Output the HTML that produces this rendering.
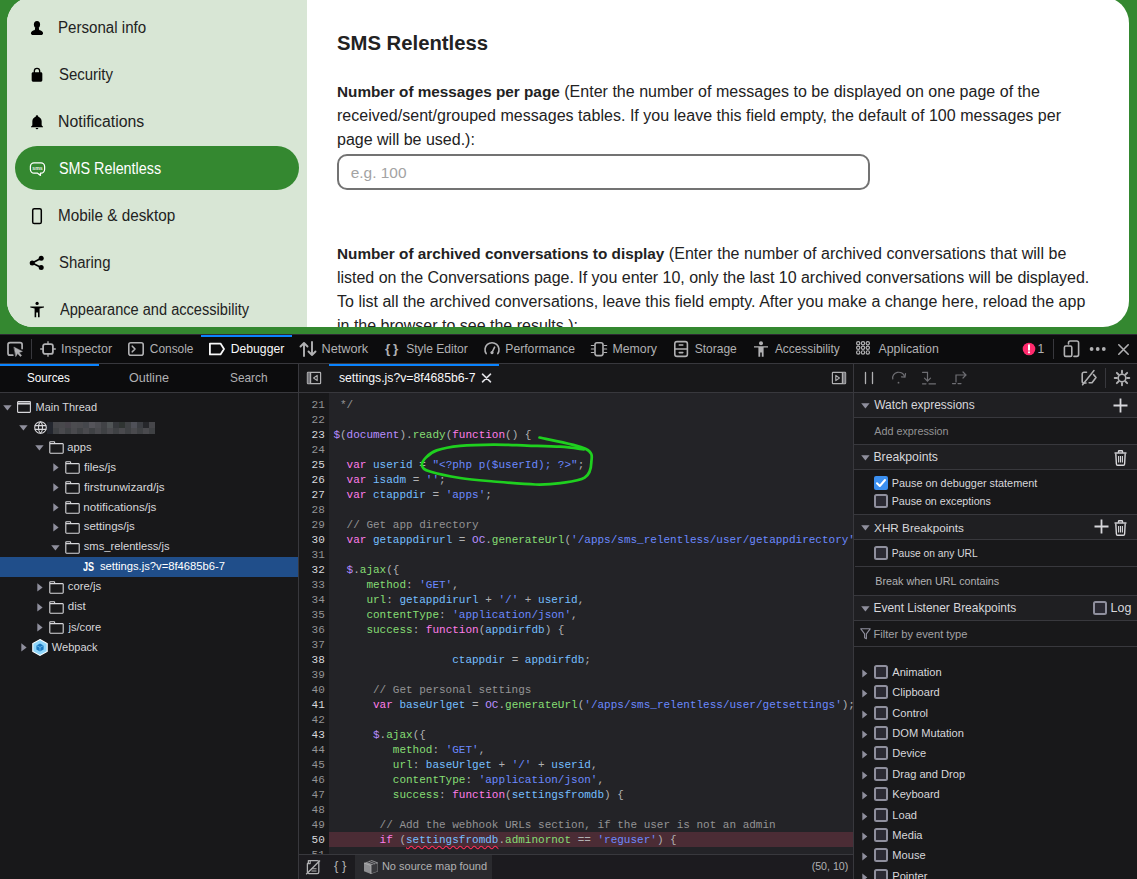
<!DOCTYPE html>
<html><head><meta charset="utf-8">
<style>
*{box-sizing:border-box;margin:0;padding:0}
html,body{width:1137px;height:879px;overflow:hidden}
body{position:relative;background:#348830;font-family:"Liberation Sans",sans-serif}
.a{position:absolute}
.nw{white-space:pre}
svg{position:absolute;overflow:visible}
</style></head>
<body>
<div class="a" style="left:7px;top:-3px;width:1122px;height:330px;border-radius:26px;overflow:hidden;background:#fff">
<div class="a" style="left:0;top:0;width:300px;height:330px;background:#d8e6d5"></div>
<div class="a" style="left:8px;top:149px;width:284px;height:44px;border-radius:22px;background:#348830"></div>
<div class="a nw" style="left:51.39px;top:20.12px;font-size:15.8px;line-height:21px;color:#222;font-family:'Liberation Sans',sans-serif;transform:scaleX(0.9557);transform-origin:0 0;">Personal info</div>
<div class="a nw" style="left:51.93px;top:67.12px;font-size:15.8px;line-height:21px;color:#222;font-family:'Liberation Sans',sans-serif;transform:scaleX(0.9463);transform-origin:0 0;">Security</div>
<div class="a nw" style="left:51.33px;top:114.12px;font-size:15.8px;line-height:21px;color:#222;font-family:'Liberation Sans',sans-serif;transform:scaleX(1.0022);transform-origin:0 0;">Notifications</div>
<div class="a nw" style="left:51.95px;top:161.12px;font-size:15.8px;line-height:21px;color:#fff;font-family:'Liberation Sans',sans-serif;transform:scaleX(0.9087);transform-origin:0 0;">SMS Relentless</div>
<div class="a nw" style="left:51.38px;top:208.12px;font-size:15.8px;line-height:21px;color:#222;font-family:'Liberation Sans',sans-serif;transform:scaleX(0.9674);transform-origin:0 0;">Mobile &amp; desktop</div>
<div class="a nw" style="left:51.93px;top:255.12px;font-size:15.8px;line-height:21px;color:#222;font-family:'Liberation Sans',sans-serif;transform:scaleX(0.9451);transform-origin:0 0;">Sharing</div>
<div class="a nw" style="left:52.60px;top:302.12px;font-size:15.8px;line-height:21px;color:#222;font-family:'Liberation Sans',sans-serif;transform:scaleX(0.9238);transform-origin:0 0;">Appearance and accessibility</div>
<svg style="left:-7px;top:3px" width="60" height="330" viewBox="0 0 60 330"><ellipse cx="37" cy="24.6" rx="3.1" ry="3.7"/><path d="M35.2,27.5 L34.8,30 C32.5,30.6 30.9,31.8 30.9,33.3 C30.9,34.5 31.8,35.1 33.2,35.1 H40.8 C42.2,35.1 43.1,34.5 43.1,33.3 C43.1,31.8 41.5,30.6 39.2,30 L38.8,27.5 Z"/></svg>
<svg style="left:22px;top:70px" width="16" height="16" viewBox="0 0 24 24"><path d="M18,8A2,2 0 0,1 20,10V20A2,2 0 0,1 18,22H6A2,2 0 0,1 4,20V10C4,8.89 4.9,8 6,8H7V6A5,5 0 0,1 12,1A5,5 0 0,1 17,6V8H18M12,3A3,3 0 0,0 9,6V8H15V6A3,3 0 0,0 12,3Z" fill="#000"/></svg>
<svg style="left:22px;top:117px" width="16" height="16" viewBox="0 0 24 24"><path d="M21,19V20H3V19L5,17V11C5,7.9 7.03,5.17 10,4.29C10,4.19 10,4.1 10,4A2,2 0 0,1 12,2A2,2 0 0,1 14,4C14,4.1 14,4.19 14,4.29C16.97,5.17 19,7.9 19,11V17L21,19M14,21A2,2 0 0,1 12,23A2,2 0 0,1 10,21" fill="#000"/></svg>
<svg style="left:22px;top:164px" width="17" height="16" viewBox="0 0 17 16"><path d="M5,1.9 H12 A3.6,3.6 0 0 1 15.6,5.5 V8.6 A3.6,3.6 0 0 1 12,12.2 H11.4 L11.5,14.4 L8.6,12.2 H5 A3.6,3.6 0 0 1 1.4,8.6 V5.5 A3.6,3.6 0 0 1 5,1.9 Z" fill="none" stroke="#fff" stroke-width="1.25" stroke-linejoin="round"/><text x="8.5" y="8.9" text-anchor="middle" font-family="Liberation Sans" font-weight="bold" font-size="5.2" fill="#fff" opacity="0.9">sms</text></svg>
<svg style="left:-7px;top:3px" width="60" height="330" viewBox="0 0 60 330"><rect x="32.7" y="208.7" width="8.6" height="14.8" rx="1.6" fill="none" stroke="#000" stroke-width="1.5"/></svg>
<svg style="left:-7px;top:3px" width="60" height="330" viewBox="0 0 60 330"><path d="M41.2,258.3 L32.2,263 L41.2,267.4" fill="none" stroke="#000" stroke-width="1.7"/><circle cx="41.2" cy="258.3" r="2.5"/><circle cx="32.2" cy="263" r="2.5"/><circle cx="41.2" cy="267.4" r="2.5"/></svg>
<svg style="left:-7px;top:3px" width="60" height="330" viewBox="0 0 60 330"><circle cx="37.1" cy="303.4" r="1.6"/><path d="M30.3,306.4 L44,306.4 L44,307.6 L39.6,308.4 V317.2 H38 V312.6 H36.2 V317.2 H34.6 V308.4 L30.3,307.6 Z"/></svg>
<div class="a nw" style="left:330.00px;top:32.86px;font-size:20.3px;line-height:26px;color:#222;font-family:'Liberation Sans',sans-serif;font-weight:bold;">SMS Relentless</div>
<div class="a nw" style="left:330.00px;top:83.75px;font-size:16px;line-height:21px;color:#222;font-family:'Liberation Sans',sans-serif;"><span style="font-size:15.3px;letter-spacing:0px;font-weight:bold;">Number of messages per page</span><span style="font-size:16px;letter-spacing:0.025px;"> (Enter the number of messages to be displayed on one page of the</span></div>
<div class="a nw" style="left:330.00px;top:107.75px;font-size:16px;line-height:21px;color:#222;font-family:'Liberation Sans',sans-serif;"><span style="font-size:16px;letter-spacing:0.03px;">received/sent/grouped messages tables. If you leave this field empty, the default of 100 messages per</span></div>
<div class="a nw" style="left:330.00px;top:131.75px;font-size:16px;line-height:21px;color:#222;font-family:'Liberation Sans',sans-serif;"><span style="font-size:16px;letter-spacing:0px;">page will be used.):</span></div>
<div class="a" style="left:330px;top:157px;width:533px;height:35.5px;border:2px solid #737373;border-radius:10px"></div>
<div class="a nw" style="left:343.78px;top:166.25px;font-size:15.42px;line-height:20px;color:#a3a3a3;font-family:'Liberation Sans',sans-serif;">e.g. 100</div>
<div class="a nw" style="left:330.00px;top:245.65px;font-size:16px;line-height:21px;color:#222;font-family:'Liberation Sans',sans-serif;"><span style="font-size:15.3px;letter-spacing:0px;font-weight:bold;">Number of archived conversations to display</span><span style="font-size:16px;letter-spacing:0.05px;"> (Enter the number of archived conversations that will be</span></div>
<div class="a nw" style="left:330.00px;top:269.75px;font-size:16px;line-height:21px;color:#222;font-family:'Liberation Sans',sans-serif;"><span style="font-size:16px;letter-spacing:-0.018px;">listed on the Conversations page. If you enter 10, only the last 10 archived conversations will be displayed.</span></div>
<div class="a nw" style="left:330.00px;top:293.55px;font-size:16px;line-height:21px;color:#222;font-family:'Liberation Sans',sans-serif;"><span style="font-size:16px;letter-spacing:0.014px;">To list all the archived conversations, leave this field empty. After you make a change here, reload the app</span></div>
<div class="a nw" style="left:330.00px;top:317.55px;font-size:16px;line-height:21px;color:#222;font-family:'Liberation Sans',sans-serif;"><span style="font-size:16px;letter-spacing:0px;">in the browser to see the results.):</span></div>
</div>
<div class="a" style="left:0px;top:334px;width:1137px;height:545px;background:#18181a;"></div>
<div class="a" style="left:0px;top:334px;width:1137px;height:1px;background:#2e2a33;"></div>
<div class="a" style="left:0px;top:335px;width:1137px;height:28px;background:#0c0c0d;"></div>
<div class="a" style="left:0px;top:363px;width:1137px;height:1px;background:#38383d;"></div>
<div class="a" style="left:0px;top:364px;width:298px;height:28px;background:#0c0c0d;"></div>
<div class="a" style="left:299px;top:364px;width:554px;height:28px;background:#18181a;"></div>
<div class="a" style="left:854px;top:364px;width:283px;height:28px;background:#18181a;"></div>
<div class="a" style="left:0px;top:392px;width:1137px;height:1px;background:#38383d;"></div>
<div class="a" style="left:298px;top:364px;width:1px;height:515px;background:#38383d;"></div>
<div class="a" style="left:853px;top:364px;width:1px;height:515px;background:#38383d;"></div>
<div class="a" style="left:299px;top:393px;width:30px;height:461px;background:#18181a;"></div>
<div class="a" style="left:329px;top:393px;width:524px;height:461px;background:#232327;"></div>
<div class="a" style="left:299px;top:393px;width:554px;height:461px;overflow:hidden">
<div class="a" style="left:30px;top:439px;width:524px;height:15px;background:#4b2c35;"></div>
<div class="a nw" style="left:12.60px;top:5.07px;font-size:11px;line-height:15px;color:#939395;font-family:'Liberation Mono',monospace;">21</div>
<div class="a nw" style="left:34.40px;top:5.07px;font-size:11px;line-height:15px;color:#b1b1b3;font-family:'Liberation Mono',monospace;"><span style="color:#939395;"> */</span></div>
<div class="a nw" style="left:12.60px;top:20.07px;font-size:11px;line-height:15px;color:#939395;font-family:'Liberation Mono',monospace;">22</div>
<div class="a nw" style="left:12.60px;top:35.07px;font-size:11px;line-height:15px;color:#d7d7db;font-family:'Liberation Mono',monospace;">23</div>
<div class="a nw" style="left:34.40px;top:35.07px;font-size:11px;line-height:15px;color:#b1b1b3;font-family:'Liberation Mono',monospace;"><span style="color:#b98eff;">$</span><span style="color:#b1b1b3;">(</span><span style="color:#b98eff;">document</span><span style="color:#b1b1b3;">).</span><span style="color:#86de74;">ready</span><span style="color:#b1b1b3;">(</span><span style="color:#ff7de9;">function</span><span style="color:#b1b1b3;">() {</span></div>
<div class="a nw" style="left:12.60px;top:50.07px;font-size:11px;line-height:15px;color:#939395;font-family:'Liberation Mono',monospace;">24</div>
<div class="a nw" style="left:12.60px;top:65.07px;font-size:11px;line-height:15px;color:#d7d7db;font-family:'Liberation Mono',monospace;">25</div>
<div class="a nw" style="left:34.40px;top:65.07px;font-size:11px;line-height:15px;color:#b1b1b3;font-family:'Liberation Mono',monospace;"><span style="color:#b1b1b3;">  </span><span style="color:#ff7de9;">var</span><span style="color:#b1b1b3;"> </span><span style="color:#75bfff;">userid</span><span style="color:#b1b1b3;"> = </span><span style="color:#6b89ff;">&quot;&lt;?php p($userId); ?&gt;&quot;</span><span style="color:#b1b1b3;">;</span></div>
<div class="a nw" style="left:12.60px;top:80.07px;font-size:11px;line-height:15px;color:#d7d7db;font-family:'Liberation Mono',monospace;">26</div>
<div class="a nw" style="left:34.40px;top:80.07px;font-size:11px;line-height:15px;color:#b1b1b3;font-family:'Liberation Mono',monospace;"><span style="color:#b1b1b3;">  </span><span style="color:#ff7de9;">var</span><span style="color:#b1b1b3;"> </span><span style="color:#75bfff;">isadm</span><span style="color:#b1b1b3;"> = </span><span style="color:#6b89ff;">&#x27;&#x27;</span><span style="color:#b1b1b3;">;</span></div>
<div class="a nw" style="left:12.60px;top:95.07px;font-size:11px;line-height:15px;color:#d7d7db;font-family:'Liberation Mono',monospace;">27</div>
<div class="a nw" style="left:34.40px;top:95.07px;font-size:11px;line-height:15px;color:#b1b1b3;font-family:'Liberation Mono',monospace;"><span style="color:#b1b1b3;">  </span><span style="color:#ff7de9;">var</span><span style="color:#b1b1b3;"> </span><span style="color:#75bfff;">ctappdir</span><span style="color:#b1b1b3;"> = </span><span style="color:#6b89ff;">&#x27;apps&#x27;</span><span style="color:#b1b1b3;">;</span></div>
<div class="a nw" style="left:12.60px;top:110.07px;font-size:11px;line-height:15px;color:#939395;font-family:'Liberation Mono',monospace;">28</div>
<div class="a nw" style="left:12.60px;top:125.07px;font-size:11px;line-height:15px;color:#939395;font-family:'Liberation Mono',monospace;">29</div>
<div class="a nw" style="left:34.40px;top:125.07px;font-size:11px;line-height:15px;color:#b1b1b3;font-family:'Liberation Mono',monospace;"><span style="color:#939395;">  // Get app directory</span></div>
<div class="a nw" style="left:12.60px;top:140.07px;font-size:11px;line-height:15px;color:#d7d7db;font-family:'Liberation Mono',monospace;">30</div>
<div class="a nw" style="left:34.40px;top:140.07px;font-size:11px;line-height:15px;color:#b1b1b3;font-family:'Liberation Mono',monospace;"><span style="color:#b1b1b3;">  </span><span style="color:#ff7de9;">var</span><span style="color:#b1b1b3;"> </span><span style="color:#75bfff;">getappdirurl</span><span style="color:#b1b1b3;"> = </span><span style="color:#b98eff;">OC</span><span style="color:#b1b1b3;">.</span><span style="color:#86de74;">generateUrl</span><span style="color:#b1b1b3;">(</span><span style="color:#6b89ff;">&#x27;/apps/sms_relentless/user/getappdirectory&#x27;</span><span style="color:#b1b1b3;">);</span></div>
<div class="a nw" style="left:12.60px;top:155.07px;font-size:11px;line-height:15px;color:#939395;font-family:'Liberation Mono',monospace;">31</div>
<div class="a nw" style="left:12.60px;top:170.07px;font-size:11px;line-height:15px;color:#d7d7db;font-family:'Liberation Mono',monospace;">32</div>
<div class="a nw" style="left:34.40px;top:170.07px;font-size:11px;line-height:15px;color:#b1b1b3;font-family:'Liberation Mono',monospace;"><span style="color:#b1b1b3;">  </span><span style="color:#b98eff;">$</span><span style="color:#b1b1b3;">.</span><span style="color:#86de74;">ajax</span><span style="color:#b1b1b3;">({</span></div>
<div class="a nw" style="left:12.60px;top:185.07px;font-size:11px;line-height:15px;color:#939395;font-family:'Liberation Mono',monospace;">33</div>
<div class="a nw" style="left:34.40px;top:185.07px;font-size:11px;line-height:15px;color:#b1b1b3;font-family:'Liberation Mono',monospace;"><span style="color:#b1b1b3;">     </span><span style="color:#86de74;">method</span><span style="color:#b1b1b3;">: </span><span style="color:#6b89ff;">&#x27;GET&#x27;</span><span style="color:#b1b1b3;">,</span></div>
<div class="a nw" style="left:12.60px;top:200.07px;font-size:11px;line-height:15px;color:#939395;font-family:'Liberation Mono',monospace;">34</div>
<div class="a nw" style="left:34.40px;top:200.07px;font-size:11px;line-height:15px;color:#b1b1b3;font-family:'Liberation Mono',monospace;"><span style="color:#b1b1b3;">     </span><span style="color:#86de74;">url</span><span style="color:#b1b1b3;">: </span><span style="color:#75bfff;">getappdirurl</span><span style="color:#b1b1b3;"> + </span><span style="color:#6b89ff;">&#x27;/&#x27;</span><span style="color:#b1b1b3;"> + </span><span style="color:#75bfff;">userid</span><span style="color:#b1b1b3;">,</span></div>
<div class="a nw" style="left:12.60px;top:215.07px;font-size:11px;line-height:15px;color:#939395;font-family:'Liberation Mono',monospace;">35</div>
<div class="a nw" style="left:34.40px;top:215.07px;font-size:11px;line-height:15px;color:#b1b1b3;font-family:'Liberation Mono',monospace;"><span style="color:#b1b1b3;">     </span><span style="color:#86de74;">contentType</span><span style="color:#b1b1b3;">: </span><span style="color:#6b89ff;">&#x27;application/json&#x27;</span><span style="color:#b1b1b3;">,</span></div>
<div class="a nw" style="left:12.60px;top:230.07px;font-size:11px;line-height:15px;color:#939395;font-family:'Liberation Mono',monospace;">36</div>
<div class="a nw" style="left:34.40px;top:230.07px;font-size:11px;line-height:15px;color:#b1b1b3;font-family:'Liberation Mono',monospace;"><span style="color:#b1b1b3;">     </span><span style="color:#86de74;">success</span><span style="color:#b1b1b3;">: </span><span style="color:#ff7de9;">function</span><span style="color:#b1b1b3;">(</span><span style="color:#75bfff;">appdirfdb</span><span style="color:#b1b1b3;">) {</span></div>
<div class="a nw" style="left:12.60px;top:245.07px;font-size:11px;line-height:15px;color:#939395;font-family:'Liberation Mono',monospace;">37</div>
<div class="a nw" style="left:12.60px;top:260.07px;font-size:11px;line-height:15px;color:#d7d7db;font-family:'Liberation Mono',monospace;">38</div>
<div class="a nw" style="left:34.40px;top:260.07px;font-size:11px;line-height:15px;color:#b1b1b3;font-family:'Liberation Mono',monospace;"><span style="color:#b1b1b3;">                  </span><span style="color:#75bfff;">ctappdir</span><span style="color:#b1b1b3;"> = </span><span style="color:#75bfff;">appdirfdb</span><span style="color:#b1b1b3;">;</span></div>
<div class="a nw" style="left:12.60px;top:275.07px;font-size:11px;line-height:15px;color:#939395;font-family:'Liberation Mono',monospace;">39</div>
<div class="a nw" style="left:12.60px;top:290.07px;font-size:11px;line-height:15px;color:#939395;font-family:'Liberation Mono',monospace;">40</div>
<div class="a nw" style="left:34.40px;top:290.07px;font-size:11px;line-height:15px;color:#b1b1b3;font-family:'Liberation Mono',monospace;"><span style="color:#939395;">      // Get personal settings</span></div>
<div class="a nw" style="left:12.60px;top:305.07px;font-size:11px;line-height:15px;color:#d7d7db;font-family:'Liberation Mono',monospace;">41</div>
<div class="a nw" style="left:34.40px;top:305.07px;font-size:11px;line-height:15px;color:#b1b1b3;font-family:'Liberation Mono',monospace;"><span style="color:#b1b1b3;">      </span><span style="color:#ff7de9;">var</span><span style="color:#b1b1b3;"> </span><span style="color:#75bfff;">baseUrlget</span><span style="color:#b1b1b3;"> = </span><span style="color:#b98eff;">OC</span><span style="color:#b1b1b3;">.</span><span style="color:#86de74;">generateUrl</span><span style="color:#b1b1b3;">(</span><span style="color:#6b89ff;">&#x27;/apps/sms_relentless/user/getsettings&#x27;</span><span style="color:#b1b1b3;">);</span></div>
<div class="a nw" style="left:12.60px;top:320.07px;font-size:11px;line-height:15px;color:#939395;font-family:'Liberation Mono',monospace;">42</div>
<div class="a nw" style="left:12.60px;top:335.07px;font-size:11px;line-height:15px;color:#d7d7db;font-family:'Liberation Mono',monospace;">43</div>
<div class="a nw" style="left:34.40px;top:335.07px;font-size:11px;line-height:15px;color:#b1b1b3;font-family:'Liberation Mono',monospace;"><span style="color:#b1b1b3;">      </span><span style="color:#b98eff;">$</span><span style="color:#b1b1b3;">.</span><span style="color:#86de74;">ajax</span><span style="color:#b1b1b3;">({</span></div>
<div class="a nw" style="left:12.60px;top:350.07px;font-size:11px;line-height:15px;color:#939395;font-family:'Liberation Mono',monospace;">44</div>
<div class="a nw" style="left:34.40px;top:350.07px;font-size:11px;line-height:15px;color:#b1b1b3;font-family:'Liberation Mono',monospace;"><span style="color:#b1b1b3;">         </span><span style="color:#86de74;">method</span><span style="color:#b1b1b3;">: </span><span style="color:#6b89ff;">&#x27;GET&#x27;</span><span style="color:#b1b1b3;">,</span></div>
<div class="a nw" style="left:12.60px;top:365.07px;font-size:11px;line-height:15px;color:#939395;font-family:'Liberation Mono',monospace;">45</div>
<div class="a nw" style="left:34.40px;top:365.07px;font-size:11px;line-height:15px;color:#b1b1b3;font-family:'Liberation Mono',monospace;"><span style="color:#b1b1b3;">         </span><span style="color:#86de74;">url</span><span style="color:#b1b1b3;">: </span><span style="color:#75bfff;">baseUrlget</span><span style="color:#b1b1b3;"> + </span><span style="color:#6b89ff;">&#x27;/&#x27;</span><span style="color:#b1b1b3;"> + </span><span style="color:#75bfff;">userid</span><span style="color:#b1b1b3;">,</span></div>
<div class="a nw" style="left:12.60px;top:380.07px;font-size:11px;line-height:15px;color:#939395;font-family:'Liberation Mono',monospace;">46</div>
<div class="a nw" style="left:34.40px;top:380.07px;font-size:11px;line-height:15px;color:#b1b1b3;font-family:'Liberation Mono',monospace;"><span style="color:#b1b1b3;">         </span><span style="color:#86de74;">contentType</span><span style="color:#b1b1b3;">: </span><span style="color:#6b89ff;">&#x27;application/json&#x27;</span><span style="color:#b1b1b3;">,</span></div>
<div class="a nw" style="left:12.60px;top:395.07px;font-size:11px;line-height:15px;color:#939395;font-family:'Liberation Mono',monospace;">47</div>
<div class="a nw" style="left:34.40px;top:395.07px;font-size:11px;line-height:15px;color:#b1b1b3;font-family:'Liberation Mono',monospace;"><span style="color:#b1b1b3;">         </span><span style="color:#86de74;">success</span><span style="color:#b1b1b3;">: </span><span style="color:#ff7de9;">function</span><span style="color:#b1b1b3;">(</span><span style="color:#75bfff;">settingsfromdb</span><span style="color:#b1b1b3;">) {</span></div>
<div class="a nw" style="left:12.60px;top:410.07px;font-size:11px;line-height:15px;color:#939395;font-family:'Liberation Mono',monospace;">48</div>
<div class="a nw" style="left:12.60px;top:425.07px;font-size:11px;line-height:15px;color:#939395;font-family:'Liberation Mono',monospace;">49</div>
<div class="a nw" style="left:34.40px;top:425.07px;font-size:11px;line-height:15px;color:#b1b1b3;font-family:'Liberation Mono',monospace;"><span style="color:#939395;">       // Add the webhook URLs section, if the user is not an admin</span></div>
<div class="a nw" style="left:12.60px;top:440.07px;font-size:11px;line-height:15px;color:#d7d7db;font-family:'Liberation Mono',monospace;">50</div>
<div class="a nw" style="left:34.40px;top:440.07px;font-size:11px;line-height:15px;color:#b1b1b3;font-family:'Liberation Mono',monospace;"><span style="color:#b1b1b3;">       </span><span style="color:#ff7de9;">if</span><span style="color:#b1b1b3;"> (</span><span style="color:#75bfff;text-decoration:underline wavy #ff2e5a;text-decoration-skip-ink:none;text-underline-offset:2px;">settingsfromdb</span><span style="color:#b1b1b3;">.</span><span style="color:#86de74;">adminornot</span><span style="color:#b1b1b3;"> == </span><span style="color:#6b89ff;">&#x27;reguser&#x27;</span><span style="color:#b1b1b3;">) {</span></div>
<div class="a nw" style="left:12.60px;top:455.07px;font-size:11px;line-height:15px;color:#939395;font-family:'Liberation Mono',monospace;">51</div>
<div class="a nw" style="left:12.60px;top:470.07px;font-size:11px;line-height:15px;color:#939395;font-family:'Liberation Mono',monospace;">52</div>
</div>
<div class="a" style="left:201px;top:335px;width:91px;height:2px;background:#0a84ff;"></div>
<svg style="left:7px;top:341px" width="17" height="16" viewBox="0 0 17 16" fill="none" stroke="#b1b1b3" stroke-width="1.6" stroke-linecap="round" stroke-linejoin="round"><path d="M5.8,14.2 H3 A2,2 0 0 1 1,12.2 V3.7 A2,2 0 0 1 3,1.7 H13.1 A2,2 0 0 1 15.1,3.7 V7.6" stroke-width="1.7"/><path d="M7.2,6.2 L15.4,10.4 L12,11.5 L14.6,14.5 L13.3,15.5 L10.7,12.6 L8.9,15.3 Z" fill="#b1b1b3" stroke-width="0.5"/></svg>
<div class="a" style="left:31px;top:339px;width:1px;height:20px;background:#38383d;"></div>
<svg style="left:40px;top:341px" width="16" height="16" viewBox="0 0 16 16" fill="none" stroke="#b1b1b3" stroke-width="1.6" stroke-linecap="round" stroke-linejoin="round"><rect x="3.1" y="3.1" width="9.8" height="9.8" rx="2" stroke-width="1.8"/><path d="M8,0.2 V3.1 M8,12.9 V15.8 M0.2,8 H3.1 M12.9,8 H15.8" stroke-width="1.3" stroke-linecap="butt"/></svg>
<div class="a nw" style="left:60.98px;top:340.89px;font-size:12.43px;line-height:16px;color:#b1b1b3;font-family:'Liberation Sans',sans-serif;">Inspector</div>
<svg style="left:128px;top:342px" width="16" height="14" viewBox="0 0 16 14" fill="none" stroke="#b1b1b3" stroke-width="1.6" stroke-linecap="round" stroke-linejoin="round"><rect x="0.8" y="0.8" width="14.4" height="12.4" rx="2"/><path d="M4.3,4.2 L7,7 L4.3,9.8"/></svg>
<div class="a nw" style="left:149.80px;top:341.57px;font-size:11.92px;line-height:15px;color:#b1b1b3;font-family:'Liberation Sans',sans-serif;">Console</div>
<svg style="left:208px;top:342px" width="18" height="14" viewBox="0 0 18 14" fill="none" stroke="#f9f9fa" stroke-width="1.8" stroke-linejoin="round"><path d="M1.9,1.6 H12.5 L16,7 L12.5,12.4 H1.9 Z"/></svg>
<div class="a nw" style="left:230.72px;top:340.97px;font-size:12.2px;line-height:16px;color:#f9f9fa;font-family:'Liberation Sans',sans-serif;">Debugger</div>
<svg style="left:299px;top:341px" width="18" height="16" viewBox="0 0 18 16" fill="none" stroke="#b1b1b3" stroke-width="1.9" stroke-linecap="round" stroke-linejoin="round"><path d="M5,15 V2 M1.5,5.5 L5,2 L8.5,5.5"/><path d="M13,1 V14 M9.5,10.5 L13,14 L16.5,10.5"/></svg>
<div class="a nw" style="left:321.48px;top:340.29px;font-size:12.73px;line-height:17px;color:#b1b1b3;font-family:'Liberation Sans',sans-serif;">Network</div>
<div class="a nw" style="left:385.00px;top:340.29px;font-size:13.6px;line-height:18px;color:#b1b1b3;font-family:'Liberation Sans',sans-serif;font-weight:bold;letter-spacing:-0.5px;">{ }</div>
<div class="a nw" style="left:406.16px;top:341.02px;font-size:12.06px;line-height:16px;color:#b1b1b3;font-family:'Liberation Sans',sans-serif;">Style Editor</div>
<svg style="left:483px;top:340px" width="18" height="16" viewBox="0 0 18 16" fill="none" stroke="#b1b1b3" stroke-width="1.6" stroke-linecap="round" stroke-linejoin="round"><path d="M3.2,13.6 A7,7 0 1 1 14.8,13.6"/><path d="M9,12.5 L11.6,7.2"/><circle cx="9" cy="12.6" r="1.6" fill="#b1b1b3" stroke="none"/></svg>
<div class="a nw" style="left:505.33px;top:340.98px;font-size:12.16px;line-height:16px;color:#b1b1b3;font-family:'Liberation Sans',sans-serif;">Performance</div>
<svg style="left:590px;top:341px" width="18" height="16" viewBox="0 0 18 16" fill="none" stroke="#b1b1b3" stroke-width="1.6" stroke-linecap="round" stroke-linejoin="round"><rect x="5" y="1.8" width="8" height="12.8" rx="2"/><path d="M1.3,4.5 H4 M1.3,8 H4 M1.3,11.5 H4 M14,4.5 H16.7 M14,8 H16.7 M14,11.5 H16.7" stroke-width="1.1"/></svg>
<div class="a nw" style="left:612.41px;top:340.92px;font-size:12.35px;line-height:16px;color:#b1b1b3;font-family:'Liberation Sans',sans-serif;">Memory</div>
<svg style="left:673px;top:340px" width="16" height="18" viewBox="0 0 16 18" fill="none" stroke="#b1b1b3" stroke-width="1.6" stroke-linecap="round" stroke-linejoin="round"><rect x="1.8" y="1.6" width="12.6" height="14.8" rx="2.2"/><path d="M2,9 H14.2 M6.3,5 H9.8 M6.3,12.6 H9.8"/></svg>
<div class="a nw" style="left:694.66px;top:341.03px;font-size:12.02px;line-height:16px;color:#b1b1b3;font-family:'Liberation Sans',sans-serif;">Storage</div>
<svg style="left:753px;top:340px" width="16" height="18" viewBox="0 0 16 18"><circle cx="8" cy="3.2" r="2" fill="#b1b1b3"/><path d="M1,6.2 H15 V7.6 H10.6 V16.8 H8.8 V12.4 H7.2 V16.8 H5.4 V7.6 H1 Z" fill="#b1b1b3"/></svg>
<div class="a nw" style="left:774.90px;top:341.57px;font-size:11.92px;line-height:15px;color:#b1b1b3;font-family:'Liberation Sans',sans-serif;">Accessibility</div>
<svg style="left:856px;top:341px" width="16" height="16" viewBox="0 0 16 16" fill="none" stroke="#b1b1b3" stroke-width="1.2"><circle cx="2.2" cy="2.2" r="1.65"/><circle cx="2.2" cy="6.8" r="1.65"/><circle cx="2.2" cy="11.399999999999999" r="1.65"/><circle cx="7.0" cy="2.2" r="1.65"/><circle cx="7.0" cy="6.8" r="1.65"/><circle cx="7.0" cy="11.399999999999999" r="1.65"/><circle cx="11.8" cy="2.2" r="1.65"/><circle cx="11.8" cy="6.8" r="1.65"/><circle cx="11.8" cy="11.399999999999999" r="1.65"/></svg>
<div class="a nw" style="left:878.50px;top:340.93px;font-size:12.33px;line-height:16px;color:#b1b1b3;font-family:'Liberation Sans',sans-serif;">Application</div>
<svg style="left:1022px;top:342px" width="14" height="14" viewBox="0 0 14 14"><circle cx="7" cy="7" r="6.3" fill="#ff2a6d"/><path d="M7,3.2 V7.8" stroke="#fff" stroke-width="2" stroke-linecap="round"/><circle cx="7" cy="10.3" r="1.1" fill="#fff"/></svg>
<div class="a nw" style="left:1037.60px;top:341.01px;font-size:12.1px;line-height:16px;color:#b1b1b3;font-family:'Liberation Sans',sans-serif;">1</div>
<div class="a" style="left:1053px;top:339px;width:1px;height:20px;background:#38383d;"></div>
<svg style="left:1063px;top:340px" width="17" height="18" viewBox="0 0 17 18" fill="none" stroke="#b1b1b3" stroke-width="1.6" stroke-linecap="round" stroke-linejoin="round"><path d="M5.5,4 V2.8 A1.8,1.8 0 0 1 7.3,1 H13.8 A1.8,1.8 0 0 1 15.6,2.8 V14.6 A1.8,1.8 0 0 1 13.8,16.4 H11"/><rect x="1.4" y="6" width="7.4" height="10.4" rx="1.4"/></svg>
<svg style="left:1089px;top:346px" width="18" height="6" viewBox="0 0 18 6" fill="#b1b1b3"><circle cx="2.6" cy="3" r="1.9"/><circle cx="8.7" cy="3" r="1.9"/><circle cx="14.8" cy="3" r="1.9"/></svg>
<svg style="left:1117px;top:343px" width="13" height="13" viewBox="0 0 13 13" fill="none" stroke="#b1b1b3" stroke-width="1.6" stroke-linecap="round" stroke-linejoin="round"><path d="M1.8,1.8 L11.2,11.2 M11.2,1.8 L1.8,11.2"/></svg>
<div class="a" style="left:0px;top:364px;width:99px;height:2px;background:#0a84ff;"></div>
<div class="a nw" style="left:27.47px;top:368.69px;font-size:13px;line-height:17px;color:#f9f9fa;font-family:'Liberation Sans',sans-serif;transform:scaleX(0.8999);transform-origin:0 0;">Sources</div>
<div class="a nw" style="left:129.03px;top:368.69px;font-size:13px;line-height:17px;color:#b1b1b3;font-family:'Liberation Sans',sans-serif;transform:scaleX(0.9681);transform-origin:0 0;">Outline</div>
<div class="a nw" style="left:230.27px;top:368.69px;font-size:13px;line-height:17px;color:#b1b1b3;font-family:'Liberation Sans',sans-serif;transform:scaleX(0.9115);transform-origin:0 0;">Search</div>
<div class="a" style="left:329px;top:364px;width:170px;height:2px;background:#0a84ff;"></div>
<svg style="left:306px;top:371px" width="16" height="14" viewBox="0 0 16 14" fill="none" stroke="#b1b1b3" stroke-width="1.6" stroke-linecap="round" stroke-linejoin="round"><rect x="1.4" y="1.4" width="13.2" height="11.2" rx="0.6" stroke-width="1.2"/><rect x="1.6" y="1.6" width="2.8" height="10.8" fill="#77777c" stroke="none"/><path d="M4.6,1.6 V12.4" stroke-width="1.2"/><path d="M11.2,4.4 L7.6,7 L11.2,9.6 Z" stroke-width="1.1"/></svg>
<div class="a nw" style="left:338.93px;top:370.35px;font-size:12.25px;line-height:16px;color:#f9f9fa;font-family:'Liberation Sans',sans-serif;">settings.js?v=8f4685b6-7</div>
<svg style="left:481px;top:373px" width="11" height="10" viewBox="0 0 11 10" fill="none" stroke="#b1b1b3" stroke-width="1.6" stroke-linecap="round" stroke-linejoin="round"><path d="M1.5,1.2 L9.5,8.8 M9.5,1.2 L1.5,8.8" stroke-width="1.6" stroke="#e0e0e4"/></svg>
<svg style="left:831px;top:371px" width="16" height="14" viewBox="0 0 16 14" fill="none" stroke="#b1b1b3" stroke-width="1.6" stroke-linecap="round" stroke-linejoin="round"><rect x="1.4" y="1.4" width="13.2" height="11.2" rx="0.6" stroke-width="1.2"/><rect x="11.6" y="1.6" width="2.8" height="10.8" fill="#77777c" stroke="none"/><path d="M11.4,1.6 V12.4" stroke-width="1.2"/><path d="M4.8,4.4 L8.4,7 L4.8,9.6 Z" stroke-width="1.1"/></svg>
<svg style="left:863px;top:371px" width="12" height="14" viewBox="0 0 12 14" fill="none" stroke="#b1b1b3" stroke-width="1.6" stroke-linecap="round" stroke-linejoin="round"><path d="M2.5,1.5 V12.5 M9.5,1.5 V12.5" stroke-width="1.3"/></svg>
<svg style="left:891px;top:371px" width="17" height="14" viewBox="0 0 17 14" fill="none" stroke="#6e6e73" stroke-width="1.2" stroke-linecap="round"><path d="M1.8,8 A6,5.5 0 0 1 13.5,5.5"/><path d="M10.5,5.8 L14,6 L14.5,2.6"/><circle cx="7.5" cy="11.7" r="0.9" fill="#6e6e73" stroke="none"/></svg>
<svg style="left:921px;top:371px" width="16" height="14" viewBox="0 0 16 14" fill="none" stroke="#6e6e73" stroke-width="1.2" stroke-linecap="round"><path d="M1.5,1.3 H6.5 V10 M3.5,7.2 L6.5,10.2 L9.5,7.2 M1.5,12.8 H5 M8,12.8 H14.5"/></svg>
<svg style="left:951px;top:369px" width="17" height="16" viewBox="0 0 17 16" fill="none" stroke="#6e6e73" stroke-width="1.2" stroke-linecap="round"><path d="M5,13 V6 H15 M12,3 L15,6 L12,9 M1.5,14.6 H4.5 M7,14.6 H10"/></svg>
<svg style="left:1080px;top:369px" width="18" height="17" viewBox="0 0 18 17" fill="none" stroke="#b1b1b3" stroke-width="1.6" stroke-linecap="round" stroke-linejoin="round"><path d="M6,14 H4 A1.8,1.8 0 0 1 2.2,12.2 V5 A1.8,1.8 0 0 1 4,3.2 H6.5"/><path d="M9.2,13.8 H12 L16,8.6 L13.5,5.5"/><path d="M14,1.5 L2.6,15.8" stroke-width="1.5"/></svg>
<div class="a" style="left:1105px;top:368px;width:1px;height:20px;background:#38383d;"></div>
<svg style="left:1114px;top:370px" width="16" height="16" viewBox="0 0 16 16" fill="none" stroke="#b1b1b3" stroke-width="1.6" stroke-linecap="round" stroke-linejoin="round"><circle cx="8" cy="8" r="3.8" stroke-width="1.6"/><path d="M13.00,8.00 L15.30,8.00" stroke-width="1.9"/><path d="M11.54,11.54 L13.16,13.16" stroke-width="1.9"/><path d="M8.00,13.00 L8.00,15.30" stroke-width="1.9"/><path d="M4.46,11.54 L2.84,13.16" stroke-width="1.9"/><path d="M3.00,8.00 L0.70,8.00" stroke-width="1.9"/><path d="M4.46,4.46 L2.84,2.84" stroke-width="1.9"/><path d="M8.00,3.00 L8.00,0.70" stroke-width="1.9"/><path d="M11.54,4.46 L13.16,2.84" stroke-width="1.9"/></svg>
<svg style="left:2.6px;top:405px" width="9" height="6" viewBox="0 0 9 6"><path d="M0.2,0.3 H8.6 L4.4,5.4 Z" fill="#8f8f9d"/></svg>
<svg style="left:17px;top:401px" width="14" height="12" viewBox="0 0 14 12" fill="none" stroke="#d7d7db" stroke-width="1.1"><rect x="0.6" y="0.6" width="12.8" height="10.8" rx="0.6"/><path d="M0.6,2.6 H13.4" stroke-width="1.9"/></svg>
<div class="a nw" style="left:35.62px;top:400.00px;font-size:10.97px;line-height:14px;color:#d7d7db;font-family:'Liberation Sans',sans-serif;">Main Thread</div>
<svg style="left:18.6px;top:425px" width="9" height="6" viewBox="0 0 9 6"><path d="M0.2,0.3 H8.6 L4.4,5.4 Z" fill="#8f8f9d"/></svg>
<svg style="left:33.5px;top:420.5px" width="13" height="13" viewBox="0 0 13 13" fill="none" stroke="#d7d7db" stroke-width="1.1"><circle cx="6.5" cy="6.5" r="5.8"/><path d="M0.7,4.6 H12.3 M0.7,8.4 H12.3"/><path d="M6.5,0.7 C3.8,3 3.8,10 6.5,12.3 C9.2,10 9.2,3 6.5,0.7" /></svg>
<svg style="left:47px;top:422px" width="108" height="12" viewBox="0 0 108 12"><rect x="0" y="0" width="6" height="6" fill="#23262e"/><rect x="0" y="6" width="6" height="6" fill="#23262e"/><rect x="6" y="0" width="6" height="6" fill="#46464a"/><rect x="6" y="6" width="6" height="6" fill="#3f4144"/><rect x="12" y="0" width="6" height="6" fill="#48484c"/><rect x="12" y="6" width="6" height="6" fill="#4a4a4e"/><rect x="18" y="0" width="6" height="6" fill="#47434a"/><rect x="18" y="6" width="6" height="6" fill="#3f4144"/><rect x="24" y="0" width="6" height="6" fill="#4c4c50"/><rect x="24" y="6" width="6" height="6" fill="#4a4a4e"/><rect x="30" y="0" width="6" height="6" fill="#4a4a4e"/><rect x="30" y="6" width="6" height="6" fill="#3f4144"/><rect x="36" y="0" width="6" height="6" fill="#45474c"/><rect x="36" y="6" width="6" height="6" fill="#4a4a4e"/><rect x="42" y="0" width="6" height="6" fill="#55545a"/><rect x="42" y="6" width="6" height="6" fill="#3f4144"/><rect x="48" y="0" width="6" height="6" fill="#4d4d52"/><rect x="48" y="6" width="6" height="6" fill="#4a4a4e"/><rect x="54" y="0" width="6" height="6" fill="#414246"/><rect x="54" y="6" width="6" height="6" fill="#3f4144"/><rect x="60" y="0" width="6" height="6" fill="#505456"/><rect x="60" y="6" width="6" height="6" fill="#4a4a4e"/><rect x="66" y="0" width="6" height="6" fill="#36383c"/><rect x="66" y="6" width="6" height="6" fill="#3f4144"/><rect x="72" y="0" width="6" height="6" fill="#2f3432"/><rect x="72" y="6" width="6" height="6" fill="#4a4a4e"/><rect x="78" y="0" width="6" height="6" fill="#3f4144"/><rect x="78" y="6" width="6" height="6" fill="#3f4144"/><rect x="84" y="0" width="6" height="6" fill="#4f5058"/><rect x="84" y="6" width="6" height="6" fill="#4a4a4e"/><rect x="90" y="0" width="6" height="6" fill="#3b3d42"/><rect x="90" y="6" width="6" height="6" fill="#3f4144"/><rect x="96" y="0" width="6" height="6" fill="#26272b"/><rect x="96" y="6" width="6" height="6" fill="#4a4a4e"/><rect x="102" y="0" width="6" height="6" fill="#46464a"/><rect x="102" y="6" width="6" height="6" fill="#3f4144"/></svg>
<svg style="left:34.8px;top:445px" width="9" height="6" viewBox="0 0 9 6"><path d="M0.2,0.3 H8.6 L4.4,5.4 Z" fill="#8f8f9d"/></svg>
<svg style="left:48.5px;top:440.5px" width="15" height="13" viewBox="0 0 15 13" fill="none" stroke="#d7d7db" stroke-width="1.1"><path d="M0.8,2.6 V1.3 A0.6,0.6 0 0 1 1.4,0.7 H5 A0.6,0.6 0 0 1 5.6,1.3 V2.6 H13.6 A0.6,0.6 0 0 1 14.2,3.2 V11.6 A0.6,0.6 0 0 1 13.6,12.2 H1.4 A0.6,0.6 0 0 1 0.8,11.6 Z M0.8,2.6 H5.6"/></svg>
<div class="a nw" style="left:67.36px;top:439.94px;font-size:11.12px;line-height:14px;color:#d7d7db;font-family:'Liberation Sans',sans-serif;">apps</div>
<svg style="left:52.6px;top:463px" width="6" height="9" viewBox="0 0 6 9"><path d="M0.3,0.2 V8.6 L5.6,4.4 Z" fill="#8f8f9d"/></svg>
<svg style="left:64.5px;top:461px" width="15" height="13" viewBox="0 0 15 13" fill="none" stroke="#d7d7db" stroke-width="1.1"><path d="M0.8,2.6 V1.3 A0.6,0.6 0 0 1 1.4,0.7 H5 A0.6,0.6 0 0 1 5.6,1.3 V2.6 H13.6 A0.6,0.6 0 0 1 14.2,3.2 V11.6 A0.6,0.6 0 0 1 13.6,12.2 H1.4 A0.6,0.6 0 0 1 0.8,11.6 Z M0.8,2.6 H5.6"/></svg>
<div class="a nw" style="left:83.93px;top:459.28px;font-size:11.61px;line-height:15px;color:#d7d7db;font-family:'Liberation Sans',sans-serif;">files/js</div>
<svg style="left:52.6px;top:483px" width="6" height="9" viewBox="0 0 6 9"><path d="M0.3,0.2 V8.6 L5.6,4.4 Z" fill="#8f8f9d"/></svg>
<svg style="left:64.5px;top:481px" width="15" height="13" viewBox="0 0 15 13" fill="none" stroke="#d7d7db" stroke-width="1.1"><path d="M0.8,2.6 V1.3 A0.6,0.6 0 0 1 1.4,0.7 H5 A0.6,0.6 0 0 1 5.6,1.3 V2.6 H13.6 A0.6,0.6 0 0 1 14.2,3.2 V11.6 A0.6,0.6 0 0 1 13.6,12.2 H1.4 A0.6,0.6 0 0 1 0.8,11.6 Z M0.8,2.6 H5.6"/></svg>
<div class="a nw" style="left:83.93px;top:479.27px;font-size:11.63px;line-height:15px;color:#d7d7db;font-family:'Liberation Sans',sans-serif;">firstrunwizard/js</div>
<svg style="left:52.6px;top:503px" width="6" height="9" viewBox="0 0 6 9"><path d="M0.3,0.2 V8.6 L5.6,4.4 Z" fill="#8f8f9d"/></svg>
<svg style="left:64.5px;top:501px" width="15" height="13" viewBox="0 0 15 13" fill="none" stroke="#d7d7db" stroke-width="1.1"><path d="M0.8,2.6 V1.3 A0.6,0.6 0 0 1 1.4,0.7 H5 A0.6,0.6 0 0 1 5.6,1.3 V2.6 H13.6 A0.6,0.6 0 0 1 14.2,3.2 V11.6 A0.6,0.6 0 0 1 13.6,12.2 H1.4 A0.6,0.6 0 0 1 0.8,11.6 Z M0.8,2.6 H5.6"/></svg>
<div class="a nw" style="left:83.34px;top:499.27px;font-size:11.63px;line-height:15px;color:#d7d7db;font-family:'Liberation Sans',sans-serif;">notifications/js</div>
<svg style="left:52.6px;top:523px" width="6" height="9" viewBox="0 0 6 9"><path d="M0.3,0.2 V8.6 L5.6,4.4 Z" fill="#8f8f9d"/></svg>
<svg style="left:64.5px;top:521px" width="15" height="13" viewBox="0 0 15 13" fill="none" stroke="#d7d7db" stroke-width="1.1"><path d="M0.8,2.6 V1.3 A0.6,0.6 0 0 1 1.4,0.7 H5 A0.6,0.6 0 0 1 5.6,1.3 V2.6 H13.6 A0.6,0.6 0 0 1 14.2,3.2 V11.6 A0.6,0.6 0 0 1 13.6,12.2 H1.4 A0.6,0.6 0 0 1 0.8,11.6 Z M0.8,2.6 H5.6"/></svg>
<div class="a nw" style="left:83.76px;top:519.32px;font-size:11.48px;line-height:15px;color:#d7d7db;font-family:'Liberation Sans',sans-serif;">settings/js</div>
<svg style="left:50.8px;top:545px" width="9" height="6" viewBox="0 0 9 6"><path d="M0.2,0.3 H8.6 L4.4,5.4 Z" fill="#8f8f9d"/></svg>
<svg style="left:64.5px;top:541px" width="15" height="13" viewBox="0 0 15 13" fill="none" stroke="#d7d7db" stroke-width="1.1"><path d="M0.8,2.6 V1.3 A0.6,0.6 0 0 1 1.4,0.7 H5 A0.6,0.6 0 0 1 5.6,1.3 V2.6 H13.6 A0.6,0.6 0 0 1 14.2,3.2 V11.6 A0.6,0.6 0 0 1 13.6,12.2 H1.4 A0.6,0.6 0 0 1 0.8,11.6 Z M0.8,2.6 H5.6"/></svg>
<div class="a nw" style="left:83.76px;top:539.42px;font-size:11.19px;line-height:15px;color:#d7d7db;font-family:'Liberation Sans',sans-serif;">sms_relentless/js</div>
<div class="a" style="left:0px;top:557px;width:298px;height:20px;background:#204e8a;"></div>
<div class="a nw" style="left:83.06px;top:558.64px;font-size:12px;line-height:16px;color:#fff;font-family:'Liberation Sans',sans-serif;font-weight:bold;transform:scaleX(0.7550);transform-origin:0 0;">JS</div>
<div class="a nw" style="left:99.96px;top:559.41px;font-size:11.22px;line-height:15px;color:#fff;font-family:'Liberation Sans',sans-serif;">settings.js?v=8f4685b6-7</div>
<svg style="left:36.6px;top:583px" width="6" height="9" viewBox="0 0 6 9"><path d="M0.3,0.2 V8.6 L5.6,4.4 Z" fill="#8f8f9d"/></svg>
<svg style="left:48.5px;top:581px" width="15" height="13" viewBox="0 0 15 13" fill="none" stroke="#d7d7db" stroke-width="1.1"><path d="M0.8,2.6 V1.3 A0.6,0.6 0 0 1 1.4,0.7 H5 A0.6,0.6 0 0 1 5.6,1.3 V2.6 H13.6 A0.6,0.6 0 0 1 14.2,3.2 V11.6 A0.6,0.6 0 0 1 13.6,12.2 H1.4 A0.6,0.6 0 0 1 0.8,11.6 Z M0.8,2.6 H5.6"/></svg>
<div class="a nw" style="left:67.75px;top:579.38px;font-size:11.32px;line-height:15px;color:#d7d7db;font-family:'Liberation Sans',sans-serif;">core/js</div>
<svg style="left:36.6px;top:603px" width="6" height="9" viewBox="0 0 6 9"><path d="M0.3,0.2 V8.6 L5.6,4.4 Z" fill="#8f8f9d"/></svg>
<svg style="left:48.5px;top:601px" width="15" height="13" viewBox="0 0 15 13" fill="none" stroke="#d7d7db" stroke-width="1.1"><path d="M0.8,2.6 V1.3 A0.6,0.6 0 0 1 1.4,0.7 H5 A0.6,0.6 0 0 1 5.6,1.3 V2.6 H13.6 A0.6,0.6 0 0 1 14.2,3.2 V11.6 A0.6,0.6 0 0 1 13.6,12.2 H1.4 A0.6,0.6 0 0 1 0.8,11.6 Z M0.8,2.6 H5.6"/></svg>
<div class="a nw" style="left:67.74px;top:599.28px;font-size:11.59px;line-height:15px;color:#d7d7db;font-family:'Liberation Sans',sans-serif;">dist</div>
<svg style="left:36.6px;top:623px" width="6" height="9" viewBox="0 0 6 9"><path d="M0.3,0.2 V8.6 L5.6,4.4 Z" fill="#8f8f9d"/></svg>
<svg style="left:48.5px;top:621px" width="15" height="13" viewBox="0 0 15 13" fill="none" stroke="#d7d7db" stroke-width="1.1"><path d="M0.8,2.6 V1.3 A0.6,0.6 0 0 1 1.4,0.7 H5 A0.6,0.6 0 0 1 5.6,1.3 V2.6 H13.6 A0.6,0.6 0 0 1 14.2,3.2 V11.6 A0.6,0.6 0 0 1 13.6,12.2 H1.4 A0.6,0.6 0 0 1 0.8,11.6 Z M0.8,2.6 H5.6"/></svg>
<div class="a nw" style="left:68.48px;top:619.95px;font-size:11.11px;line-height:14px;color:#d7d7db;font-family:'Liberation Sans',sans-serif;">js/core</div>
<svg style="left:20.6px;top:643px" width="6" height="9" viewBox="0 0 6 9"><path d="M0.3,0.2 V8.6 L5.6,4.4 Z" fill="#8f8f9d"/></svg>
<svg style="left:32px;top:638.5px" width="16" height="17" viewBox="0 0 16 17"><path d="M8,0.6 L15.2,4.5 V12.5 L8,16.4 L0.8,12.5 V4.5 Z" fill="#8ed6fb" stroke="#fff" stroke-width="1.1"/><path d="M8,4.6 L11.6,6.5 V10.6 L8,12.5 L4.4,10.6 V6.5 Z" fill="#1c78c0"/><path d="M4.4,6.5 L8,8.4 L11.6,6.5 M8,8.4 V12.5" stroke="#8ed6fb" stroke-width="0.6" fill="none"/></svg>
<div class="a nw" style="left:51.84px;top:639.98px;font-size:11.03px;line-height:14px;color:#d7d7db;font-family:'Liberation Sans',sans-serif;">Webpack</div>
<div class="a" style="left:854px;top:393px;width:283px;height:24px;background:#1f1f22;"></div>
<div class="a" style="left:854px;top:417px;width:283px;height:1px;background:#38383d;"></div>
<svg style="left:860.7px;top:402.7px" width="9" height="6" viewBox="0 0 9 6"><path d="M0.2,0.3 H8.6 L4.4,5.4 Z" fill="#8f8f9d"/></svg>
<div class="a nw" style="left:874.24px;top:397.16px;font-size:11.95px;line-height:16px;color:#d7d7db;font-family:'Liberation Sans',sans-serif;">Watch expressions</div>
<svg style="left:1113.4px;top:398px" width="15" height="15" viewBox="0 0 15 15"><path d="M7.5,0.5 V14.5 M0.5,7.5 H14.5" stroke="#d7d7db" stroke-width="1.8"/></svg>
<div class="a" style="left:854px;top:418px;width:283px;height:26px;background:#18181a;"></div>
<div class="a" style="left:854px;top:444px;width:283px;height:1px;background:#38383d;"></div>
<div class="a nw" style="left:874.20px;top:424.05px;font-size:10.81px;line-height:14px;color:#939395;font-family:'Liberation Sans',sans-serif;">Add expression</div>
<div class="a" style="left:854px;top:445px;width:283px;height:24px;background:#1f1f22;"></div>
<div class="a" style="left:854px;top:469px;width:283px;height:1px;background:#38383d;"></div>
<svg style="left:860.7px;top:454.7px" width="9" height="6" viewBox="0 0 9 6"><path d="M0.2,0.3 H8.6 L4.4,5.4 Z" fill="#8f8f9d"/></svg>
<div class="a nw" style="left:873.42px;top:449.06px;font-size:12.22px;line-height:16px;color:#d7d7db;font-family:'Liberation Sans',sans-serif;">Breakpoints</div>
<svg style="left:1114.2px;top:449.6px" width="13" height="16" viewBox="0 0 13 16" fill="none" stroke="#d7d7db" stroke-width="1.4"><path d="M0.5,3 H12.5"/><path d="M4.5,2.8 V1.4 A0.7,0.7 0 0 1 5.2,0.7 H7.8 A0.7,0.7 0 0 1 8.5,1.4 V2.8"/><path d="M1.8,3.5 L2.4,14 A1.2,1.2 0 0 0 3.6,15.2 H9.4 A1.2,1.2 0 0 0 10.6,14 L11.2,3.5"/><path d="M4.6,6 V12.6 M6.5,6 V12.6 M8.4,6 V12.6" stroke-width="1.1"/></svg>
<div class="a" style="left:854px;top:470px;width:283px;height:44px;background:#18181a;"></div>
<div class="a" style="left:854px;top:514px;width:283px;height:1px;background:#38383d;"></div>
<svg style="left:874px;top:476px" width="14" height="14" viewBox="0 0 14 14"><rect x="0" y="0" width="14" height="14" rx="2" fill="#3b8ff0"/><path d="M3,7.2 L5.8,10 L11,4" fill="none" stroke="#fff" stroke-width="2" stroke-linecap="round" stroke-linejoin="round"/></svg>
<div class="a nw" style="left:891.63px;top:475.72px;font-size:10.89px;line-height:14px;color:#d7d7db;font-family:'Liberation Sans',sans-serif;">Pause on debugger statement</div>
<svg style="left:874px;top:494px" width="14" height="14" viewBox="0 0 14 14"><rect x="1" y="1" width="12" height="12" rx="1.5" fill="#2b2a33" stroke="#8f8f9d" stroke-width="2"/></svg>
<div class="a nw" style="left:891.65px;top:493.79px;font-size:10.69px;line-height:14px;color:#d7d7db;font-family:'Liberation Sans',sans-serif;">Pause on exceptions</div>
<div class="a" style="left:854px;top:515px;width:283px;height:24px;background:#1f1f22;"></div>
<div class="a" style="left:854px;top:539px;width:283px;height:1px;background:#38383d;"></div>
<svg style="left:860.7px;top:524.7px" width="9" height="6" viewBox="0 0 9 6"><path d="M0.2,0.3 H8.6 L4.4,5.4 Z" fill="#8f8f9d"/></svg>
<div class="a nw" style="left:874.11px;top:519.74px;font-size:11.71px;line-height:15px;color:#d7d7db;font-family:'Liberation Sans',sans-serif;">XHR Breakpoints</div>
<svg style="left:1093.6px;top:519px" width="15" height="15" viewBox="0 0 15 15"><path d="M7.5,0.5 V14.5 M0.5,7.5 H14.5" stroke="#d7d7db" stroke-width="1.8"/></svg>
<svg style="left:1114.2px;top:519.6px" width="13" height="16" viewBox="0 0 13 16" fill="none" stroke="#d7d7db" stroke-width="1.4"><path d="M0.5,3 H12.5"/><path d="M4.5,2.8 V1.4 A0.7,0.7 0 0 1 5.2,0.7 H7.8 A0.7,0.7 0 0 1 8.5,1.4 V2.8"/><path d="M1.8,3.5 L2.4,14 A1.2,1.2 0 0 0 3.6,15.2 H9.4 A1.2,1.2 0 0 0 10.6,14 L11.2,3.5"/><path d="M4.6,6 V12.6 M6.5,6 V12.6 M8.4,6 V12.6" stroke-width="1.1"/></svg>
<div class="a" style="left:854px;top:540px;width:283px;height:26px;background:#18181a;"></div>
<div class="a" style="left:855px;top:566px;width:282px;height:1px;background:#38383d;"></div>
<svg style="left:874px;top:546px" width="14" height="14" viewBox="0 0 14 14"><rect x="1" y="1" width="12" height="12" rx="1.5" fill="#2b2a33" stroke="#8f8f9d" stroke-width="2"/></svg>
<div class="a nw" style="left:891.68px;top:547.24px;font-size:10.26px;line-height:13px;color:#d7d7db;font-family:'Liberation Sans',sans-serif;">Pause on any URL</div>
<div class="a" style="left:854px;top:567px;width:283px;height:28px;background:#18181a;"></div>
<div class="a" style="left:854px;top:595px;width:283px;height:1px;background:#38383d;"></div>
<div class="a nw" style="left:875.34px;top:574.27px;font-size:10.76px;line-height:14px;color:#b1b1b3;font-family:'Liberation Sans',sans-serif;">Break when URL contains</div>
<div class="a" style="left:854px;top:596px;width:283px;height:24px;background:#1f1f22;"></div>
<div class="a" style="left:854px;top:620px;width:283px;height:1px;background:#38383d;"></div>
<svg style="left:860.7px;top:605.7px" width="9" height="6" viewBox="0 0 9 6"><path d="M0.2,0.3 H8.6 L4.4,5.4 Z" fill="#8f8f9d"/></svg>
<div class="a nw" style="left:873.44px;top:600.15px;font-size:11.96px;line-height:16px;color:#d7d7db;font-family:'Liberation Sans',sans-serif;">Event Listener Breakpoints</div>
<svg style="left:1093.3px;top:601px" width="14" height="14" viewBox="0 0 14 14"><rect x="1" y="1" width="12" height="12" rx="1.5" fill="#2b2a33" stroke="#8f8f9d" stroke-width="2"/></svg>
<div class="a nw" style="left:1110.61px;top:599.99px;font-size:12.43px;line-height:16px;color:#d7d7db;font-family:'Liberation Sans',sans-serif;">Log</div>
<div class="a" style="left:854px;top:621px;width:283px;height:25px;background:#18181a;"></div>
<div class="a" style="left:854px;top:646px;width:283px;height:1px;background:#38383d;"></div>
<svg style="left:860px;top:628px" width="11" height="12" viewBox="0 0 11 12"><path d="M0.8,0.8 H10.2 L6.4,5.8 V10.8 L4.6,9.8 V5.8 Z" fill="none" stroke="#8f8f9d" stroke-width="1.1" stroke-linejoin="round"/></svg>
<div class="a nw" style="left:873.51px;top:626.65px;font-size:11.11px;line-height:14px;color:#a3a3a6;font-family:'Liberation Sans',sans-serif;">Filter by event type</div>
<svg style="left:861.8px;top:668.5px" width="6" height="9" viewBox="0 0 6 9"><path d="M0.3,0.4 V8.4 L5.3,4.4 Z" fill="#8f8f9d"/></svg>
<svg style="left:874px;top:665px" width="14" height="14" viewBox="0 0 14 14"><rect x="1" y="1" width="12" height="12" rx="1.5" fill="#2b2a33" stroke="#8f8f9d" stroke-width="2"/></svg>
<div class="a nw" style="left:892.30px;top:665.15px;font-size:11.1px;line-height:14px;color:#d7d7db;font-family:'Liberation Sans',sans-serif;">Animation</div>
<svg style="left:861.8px;top:688.5px" width="6" height="9" viewBox="0 0 6 9"><path d="M0.3,0.4 V8.4 L5.3,4.4 Z" fill="#8f8f9d"/></svg>
<svg style="left:874px;top:685px" width="14" height="14" viewBox="0 0 14 14"><rect x="1" y="1" width="12" height="12" rx="1.5" fill="#2b2a33" stroke="#8f8f9d" stroke-width="2"/></svg>
<div class="a nw" style="left:892.30px;top:685.15px;font-size:11.1px;line-height:14px;color:#d7d7db;font-family:'Liberation Sans',sans-serif;">Clipboard</div>
<svg style="left:861.8px;top:709.5px" width="6" height="9" viewBox="0 0 6 9"><path d="M0.3,0.4 V8.4 L5.3,4.4 Z" fill="#8f8f9d"/></svg>
<svg style="left:874px;top:706px" width="14" height="14" viewBox="0 0 14 14"><rect x="1" y="1" width="12" height="12" rx="1.5" fill="#2b2a33" stroke="#8f8f9d" stroke-width="2"/></svg>
<div class="a nw" style="left:892.30px;top:706.15px;font-size:11.1px;line-height:14px;color:#d7d7db;font-family:'Liberation Sans',sans-serif;">Control</div>
<svg style="left:861.8px;top:729.5px" width="6" height="9" viewBox="0 0 6 9"><path d="M0.3,0.4 V8.4 L5.3,4.4 Z" fill="#8f8f9d"/></svg>
<svg style="left:874px;top:726px" width="14" height="14" viewBox="0 0 14 14"><rect x="1" y="1" width="12" height="12" rx="1.5" fill="#2b2a33" stroke="#8f8f9d" stroke-width="2"/></svg>
<div class="a nw" style="left:892.30px;top:726.15px;font-size:11.1px;line-height:14px;color:#d7d7db;font-family:'Liberation Sans',sans-serif;">DOM Mutation</div>
<svg style="left:861.8px;top:749.5px" width="6" height="9" viewBox="0 0 6 9"><path d="M0.3,0.4 V8.4 L5.3,4.4 Z" fill="#8f8f9d"/></svg>
<svg style="left:874px;top:746px" width="14" height="14" viewBox="0 0 14 14"><rect x="1" y="1" width="12" height="12" rx="1.5" fill="#2b2a33" stroke="#8f8f9d" stroke-width="2"/></svg>
<div class="a nw" style="left:892.30px;top:746.15px;font-size:11.1px;line-height:14px;color:#d7d7db;font-family:'Liberation Sans',sans-serif;">Device</div>
<svg style="left:861.8px;top:770.5px" width="6" height="9" viewBox="0 0 6 9"><path d="M0.3,0.4 V8.4 L5.3,4.4 Z" fill="#8f8f9d"/></svg>
<svg style="left:874px;top:767px" width="14" height="14" viewBox="0 0 14 14"><rect x="1" y="1" width="12" height="12" rx="1.5" fill="#2b2a33" stroke="#8f8f9d" stroke-width="2"/></svg>
<div class="a nw" style="left:892.30px;top:767.15px;font-size:11.1px;line-height:14px;color:#d7d7db;font-family:'Liberation Sans',sans-serif;">Drag and Drop</div>
<svg style="left:861.8px;top:790.5px" width="6" height="9" viewBox="0 0 6 9"><path d="M0.3,0.4 V8.4 L5.3,4.4 Z" fill="#8f8f9d"/></svg>
<svg style="left:874px;top:787px" width="14" height="14" viewBox="0 0 14 14"><rect x="1" y="1" width="12" height="12" rx="1.5" fill="#2b2a33" stroke="#8f8f9d" stroke-width="2"/></svg>
<div class="a nw" style="left:892.30px;top:787.15px;font-size:11.1px;line-height:14px;color:#d7d7db;font-family:'Liberation Sans',sans-serif;">Keyboard</div>
<svg style="left:861.8px;top:811.5px" width="6" height="9" viewBox="0 0 6 9"><path d="M0.3,0.4 V8.4 L5.3,4.4 Z" fill="#8f8f9d"/></svg>
<svg style="left:874px;top:808px" width="14" height="14" viewBox="0 0 14 14"><rect x="1" y="1" width="12" height="12" rx="1.5" fill="#2b2a33" stroke="#8f8f9d" stroke-width="2"/></svg>
<div class="a nw" style="left:892.30px;top:808.15px;font-size:11.1px;line-height:14px;color:#d7d7db;font-family:'Liberation Sans',sans-serif;">Load</div>
<svg style="left:861.8px;top:831.5px" width="6" height="9" viewBox="0 0 6 9"><path d="M0.3,0.4 V8.4 L5.3,4.4 Z" fill="#8f8f9d"/></svg>
<svg style="left:874px;top:828px" width="14" height="14" viewBox="0 0 14 14"><rect x="1" y="1" width="12" height="12" rx="1.5" fill="#2b2a33" stroke="#8f8f9d" stroke-width="2"/></svg>
<div class="a nw" style="left:892.30px;top:828.15px;font-size:11.1px;line-height:14px;color:#d7d7db;font-family:'Liberation Sans',sans-serif;">Media</div>
<svg style="left:861.8px;top:851.5px" width="6" height="9" viewBox="0 0 6 9"><path d="M0.3,0.4 V8.4 L5.3,4.4 Z" fill="#8f8f9d"/></svg>
<svg style="left:874px;top:848px" width="14" height="14" viewBox="0 0 14 14"><rect x="1" y="1" width="12" height="12" rx="1.5" fill="#2b2a33" stroke="#8f8f9d" stroke-width="2"/></svg>
<div class="a nw" style="left:892.30px;top:848.15px;font-size:11.1px;line-height:14px;color:#d7d7db;font-family:'Liberation Sans',sans-serif;">Mouse</div>
<svg style="left:861.8px;top:872.5px" width="6" height="9" viewBox="0 0 6 9"><path d="M0.3,0.4 V8.4 L5.3,4.4 Z" fill="#8f8f9d"/></svg>
<svg style="left:874px;top:869px" width="14" height="14" viewBox="0 0 14 14"><rect x="1" y="1" width="12" height="12" rx="1.5" fill="#2b2a33" stroke="#8f8f9d" stroke-width="2"/></svg>
<div class="a nw" style="left:892.30px;top:869.15px;font-size:11.1px;line-height:14px;color:#d7d7db;font-family:'Liberation Sans',sans-serif;">Pointer</div>
<div class="a" style="left:299px;top:854px;width:554px;height:1px;background:#38383d;"></div>
<div class="a" style="left:299px;top:855px;width:554px;height:24px;background:#1c1b1f;"></div>
<div class="a" style="left:355px;top:855px;width:137px;height:24px;background:#2a2a2e;"></div>
<svg style="left:305px;top:859px" width="16" height="16" viewBox="0 0 16 16" fill="none" stroke="#b1b1b3" stroke-width="1.3" stroke-linejoin="round"><path d="M3.4,1.6 H12.2 A1.6,1.6 0 0 1 13.8,3.2 V13 A1.6,1.6 0 0 1 12.2,14.6 H4 A1.6,1.6 0 0 1 2.4,13 V4.8 L3.4,3.8 Z"/><path d="M2.6,4.6 H5.2 V2" stroke-width="1.1"/><path d="M6.5,9.8 H11.5 M6.5,12 H11.5" stroke-width="1.1"/><path d="M15,1.5 L1.2,15.2" stroke-width="1.3"/></svg>
<div class="a nw" style="left:334.00px;top:856.79px;font-size:13px;line-height:17px;color:#b1b1b3;font-family:'Liberation Sans',sans-serif;letter-spacing:0px;">{ }</div>
<svg style="left:363px;top:859px" width="16" height="16" viewBox="0 0 16 16"><path d="M1,4 L8.5,1 L15,3.6 V12.4 L8,15 L1,12.2 Z" fill="#8f8f92"/><path d="M8,6.6 L14.6,4.2 V12.2 L8,14.6 Z" fill="#38383c"/><path d="M1,4 L8,6.6 V15" fill="none" stroke="#b1b1b3" stroke-width="0.8"/><path d="M4.2,2.7 L11,5.3 M6.7,1.7 L13,4.3" stroke="#38383c" stroke-width="1"/></svg>
<div class="a nw" style="left:381.92px;top:858.69px;font-size:11.0px;line-height:14px;color:#b1b1b3;font-family:'Liberation Sans',sans-serif;">No source map found</div>
<div class="a nw" style="left:811.66px;top:858.81px;font-size:10.65px;line-height:14px;color:#b1b1b3;font-family:'Liberation Sans',sans-serif;">(50, 10)</div>
<svg style="left:0;top:0" width="1137" height="879" viewBox="0 0 1137 879"><path d="M539.51,437.52 C547.17,439.39 576.83,444.54 585.47,448.72 C594.10,452.89 591.46,457.77 591.32,462.59 C591.18,467.41 589.78,474.20 584.63,477.63 C579.48,481.05 568.62,482.00 560.40,483.14 C552.18,484.28 546.48,484.76 535.33,484.48 C524.19,484.20 506.09,482.56 493.56,481.47 C481.02,480.38 470.72,479.63 460.13,477.96 C449.55,476.29 436.40,473.45 430.05,471.44 C423.70,469.44 422.73,468.24 422.03,465.93 C421.34,463.62 423.42,460.16 425.88,457.57 C428.33,454.98 431.03,452.34 436.74,450.39 C442.45,448.44 450.66,446.85 460.13,445.88 C469.60,444.90 482.42,444.59 493.56,444.54 C504.70,444.48 515.84,445.18 526.98,445.54 C538.12,445.90 550.93,446.07 560.40,446.71 C569.87,447.35 579.90,448.94 583.80,449.39" fill="none" stroke="#1fd01f" stroke-width="2.7" stroke-linecap="round" stroke-linejoin="round"/></svg>
</body></html>
